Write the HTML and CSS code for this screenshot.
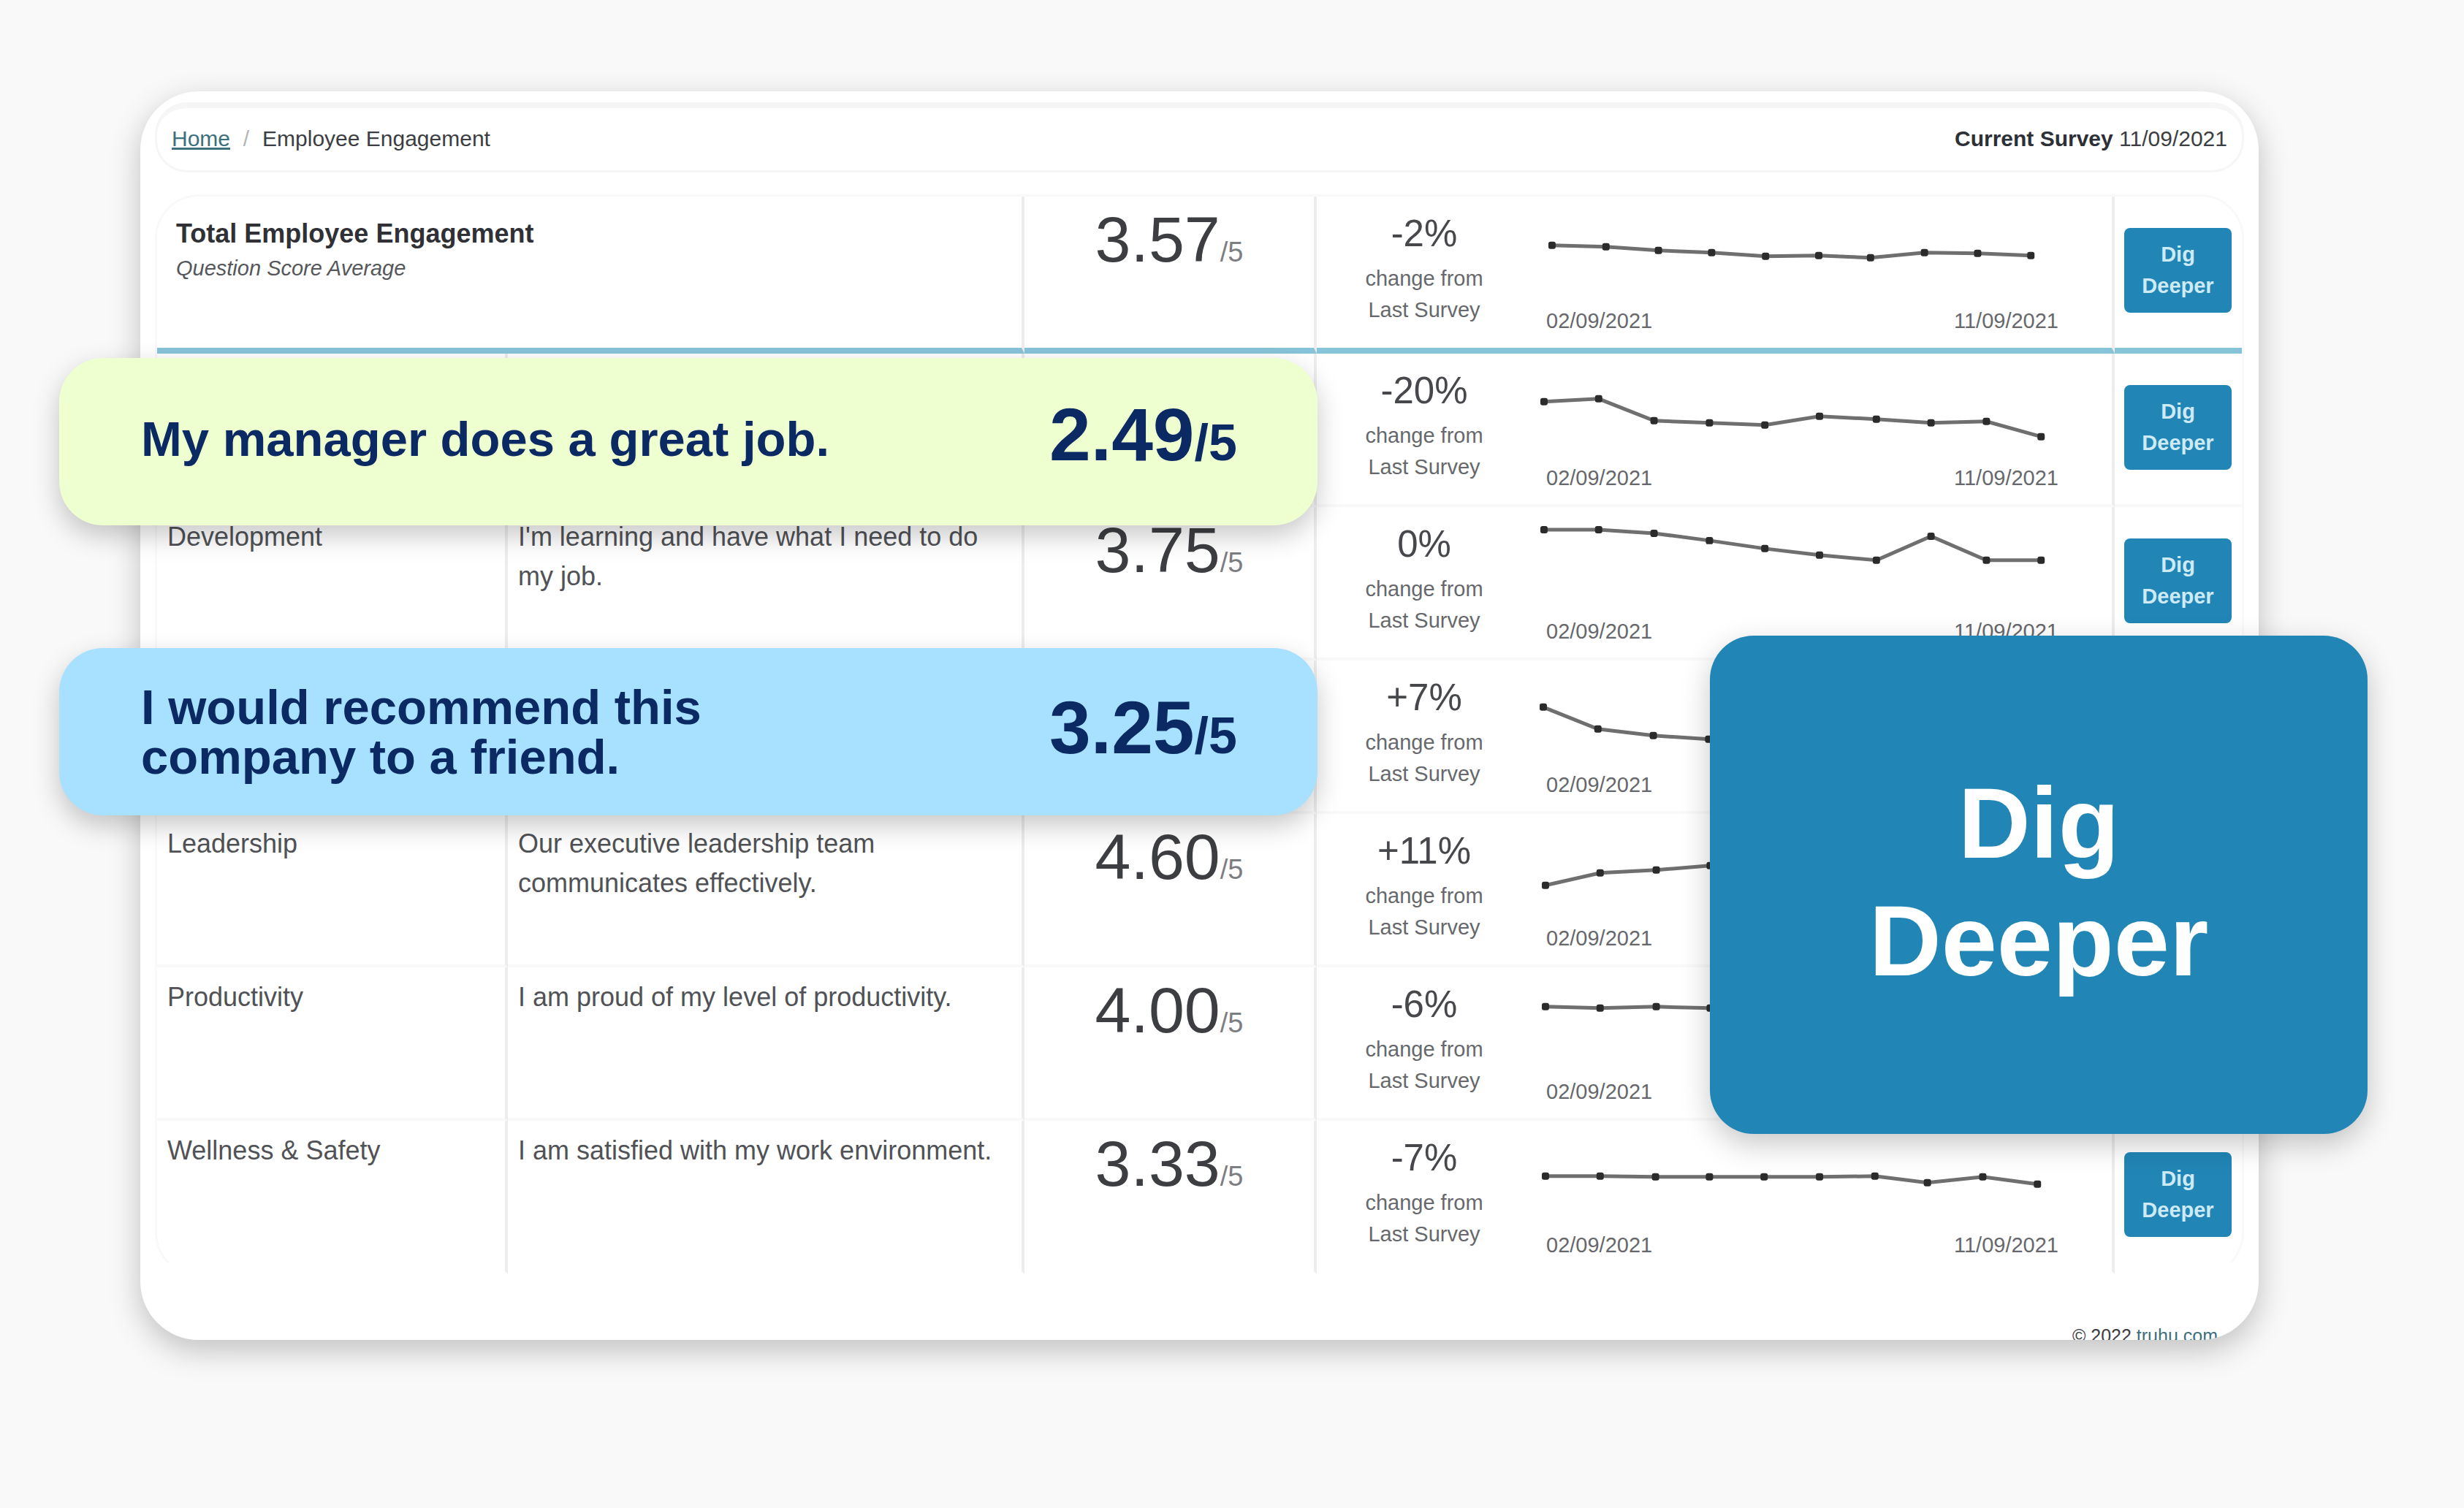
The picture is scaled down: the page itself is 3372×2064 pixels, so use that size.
FILE: index.html
```html
<!DOCTYPE html>
<html lang="en">
<head>
<meta charset="utf-8">
<title>Employee Engagement</title>
<link rel="stylesheet" href="styles.css">
</head>
<body>
<main class="stage">
  <section class="panel">
    <header class="topbar">
      <nav class="crumbs"><a href="#">Home</a><span class="sep">/</span><span>Employee Engagement</span></nav>
      <p class="current"><strong>Current Survey</strong> 11/09/2021</p>
    </header>
    <table class="scores">
      <colgroup><col class="c-name"><col class="c-text"><col class="c-score"><col class="c-change"><col class="c-trend"><col class="c-action"></colgroup>
      <tbody>
        <tr class="total">
          <th colspan="2" scope="row">Total Employee Engagement<em>Question Score Average</em></th>
          <td class="score">3.57<small>/5</small></td>
          <td class="change"><b>-2%</b>change from<br>Last Survey</td>
          <td class="trend">
            <svg viewBox="0 0 796 146"><polyline points="28,67 102,69 174,74 247,77 321,82 394,81 465,84 539,77 612,78 685,81"/></svg>
            <div class="dates"><span>02/09/2021</span><span>11/09/2021</span></div>
          </td>
          <td class="action"><button type="button">Dig Deeper</button></td>
        </tr>
        <tr>
          <td class="name"></td><td class="text"></td><td class="score"></td>
          <td class="change"><b>-20%</b>change from<br>Last Survey</td>
          <td class="trend">
            <svg viewBox="0 0 796 146"><polyline points="17,66 92,62 168,92 244,95 320,98 395,86 473,90 548,95 624,93 699,114"/></svg>
            <div class="dates"><span>02/09/2021</span><span>11/09/2021</span></div>
          </td>
          <td class="action"><button type="button">Dig Deeper</button></td>
        </tr>
        <tr>
          <td class="name">Development</td><td class="text">I'm learning and have what I need to do my job.</td><td class="score">3.75<small>/5</small></td>
          <td class="change"><b>0%</b>change from<br>Last Survey</td>
          <td class="trend">
            <svg viewBox="0 0 796 146"><polyline points="17,31 92,31 168,36 244,46 320,57 395,66 473,73 548,40 624,73 699,73"/></svg>
            <div class="dates"><span>02/09/2021</span><span>11/09/2021</span></div>
          </td>
          <td class="action"><button type="button">Dig Deeper</button></td>
        </tr>
        <tr>
          <td class="name"></td><td class="text"></td><td class="score"></td>
          <td class="change"><b>+7%</b>change from<br>Last Survey</td>
          <td class="trend">
            <svg viewBox="0 0 796 146"><polyline points="16,64 91,94 167,103 243,108"/></svg>
            <div class="dates"><span>02/09/2021</span></div>
          </td>
          <td class="action"></td>
        </tr>
        <tr>
          <td class="name">Leadership</td><td class="text">Our executive leadership team communicates effectively.</td><td class="score">4.60<small>/5</small></td>
          <td class="change"><b>+11%</b>change from<br>Last Survey</td>
          <td class="trend">
            <svg viewBox="0 0 796 146"><polyline points="19,98 94,81 171,77 245,71"/></svg>
            <div class="dates"><span>02/09/2021</span></div>
          </td>
          <td class="action"></td>
        </tr>
        <tr>
          <td class="name">Productivity</td><td class="text">I am proud of my level of productivity.</td><td class="score">4.00<small>/5</small></td>
          <td class="change"><b>-6%</b>change from<br>Last Survey</td>
          <td class="trend">
            <svg viewBox="0 0 796 146"><polyline points="19,54 94,56 171,54 245,56"/></svg>
            <div class="dates"><span>02/09/2021</span></div>
          </td>
          <td class="action"></td>
        </tr>
        <tr>
          <td class="name">Wellness &amp; Safety</td><td class="text">I am satisfied with my work environment.</td><td class="score">3.33<small>/5</small></td>
          <td class="change"><b>-7%</b>change from<br>Last Survey</td>
          <td class="trend">
            <svg viewBox="0 0 796 146"><polyline points="19,76 94,76 170,77 244,77 319,77 395,77 471,76 543,85 619,77 694,87"/></svg>
            <div class="dates"><span>02/09/2021</span><span>11/09/2021</span></div>
          </td>
          <td class="action"><button type="button">Dig Deeper</button></td>
        </tr>
      </tbody>
    </table>
    <footer class="legal">© 2022 <a href="#">truhu.com</a></footer>
  </section>

  <aside class="callout green"><p>My manager does a great job.</p><p class="mark">2.49<small>/5</small></p></aside>
  <aside class="callout blue"><p>I would recommend this<br>company to a friend.</p><p class="mark">3.25<small>/5</small></p></aside>
  <button class="dig" type="button">Dig<br>Deeper</button>
</main>

<svg class="defs" width="0" height="0" aria-hidden="true">
  <defs><marker id="dot" viewBox="0 0 12 12" refX="6" refY="6" markerWidth="12" markerHeight="12" markerUnits="userSpaceOnUse"><rect x="1" y="1" width="10" height="10" rx="3" fill="#2b2b2b"/></marker></defs>
</svg>
</body>
</html>
```

FILE: styles.css
```css
* { box-sizing: border-box; }

body {
  margin: 0;
  background: #f9f9f9;
  color: #3c3e42;
  font-family: "Liberation Sans", Arial, Helvetica, sans-serif;
}

p { margin: 0; }
.defs { position: absolute; }

.stage {
  position: relative;
  margin: 125px 281px 230px 192px;
}

.panel {
  overflow: hidden;
  padding: 15px 20px 0 20px;
  background: #fff;
  border-radius: 80px;
  box-shadow: 0 14px 44px rgba(0, 0, 0, .23);
}

/* breadcrumb bar */
.topbar {
  display: flex;
  justify-content: space-between;
  align-items: center;
  height: 96px;
  margin-bottom: 30px;
  padding: 0 20px 2px;
  border: 3px solid #f6f6f6;
  border-top-width: 8px;
  border-radius: 44px;
  font-size: 30px;
}
.crumbs { display: flex; }
.crumbs a { color: #3d6f7c; }
.sep { width: 44px; text-align: center; color: #b5b5b5; }
.current strong { color: #2d3036; }

/* score table */
.scores {
  width: 100%;
  table-layout: fixed;
  border-collapse: separate;
  border-spacing: 0;
  border: 3px solid #f9f9f9;
  border-bottom-color: transparent;
  border-radius: 60px;
}
.c-name { width: 480px; }
.c-score { width: 400px; }
.c-change { width: 294px; }
.c-trend { width: 798px; }
.c-action { width: 174px; }
.c-text { width: auto; }

.scores tr { height: 210px; }
.scores .total { height: 215px; }
.scores td, .scores th {
  padding: 0;
  vertical-align: top;
  border-bottom: 4px solid #f9f9f9;
  border-right: 4px solid #ededed;
}
.scores .total > * { border-bottom: 8px solid #87c3d9; }
.scores tr:last-child > * { border-bottom-color: transparent; }
.scores .change, .scores .action { border-right: 0; }

.scores th {
  padding: 24px 26px 0;
  text-align: left;
  color: #2f3136;
  font-size: 36px;
  line-height: 54px;
}
.scores em {
  display: block;
  font-size: 29px;
  line-height: 40px;
  font-weight: 400;
  color: #55575b;
}
.scores .name, .scores .text {
  padding: 14px 12px 0 14px;
  color: #505256;
  font-size: 36px;
  line-height: 54px;
}
.score {
  text-align: center;
  font-size: 88px;
  line-height: 118px;
}
.score small { font-size: 38px; color: #7c7e82; }
.scores .change {
  padding-top: 19px;
  text-align: center;
  font-size: 29px;
  line-height: 43px;
  color: #66686c;
}
.change b {
  display: block;
  margin-bottom: 8px;
  font-size: 51px;
  line-height: 64px;
  font-weight: 400;
  color: #46484c;
}
.trend svg { display: block; width: 100%; height: auto; }
.trend polyline {
  fill: none;
  stroke: #6f6f6f;
  stroke-width: 5;
  marker-start: url(#dot);
  marker-mid: url(#dot);
  marker-end: url(#dot);
}
.dates {
  display: flex;
  justify-content: space-between;
  padding: 4px 73px 0 20px;
  font-size: 29px;
  line-height: 40px;
  color: #66686c;
}
.scores .action { padding: 43px 14px 0 13px; }
.action button {
  display: block;
  width: 100%;
  height: 116px;
  padding: 0 20px;
  border: 0;
  border-radius: 8px;
  background: #2186b6;
  color: #cdeaf5;
  font: 700 29px/43px "Liberation Sans", Arial, sans-serif;
}

.legal {
  height: 20px;
  margin-top: 67px;
  padding-right: 36px;
  overflow: hidden;
  text-align: right;
  font-size: 25px;
  line-height: 28px;
}
.legal a { color: #3d6f7c; }

/* enlarged callouts lying over the panel */
.callout {
  position: absolute;
  left: -111px;
  display: flex;
  justify-content: space-between;
  align-items: center;
  width: 1722px;
  height: 229px;
  padding: 0 110px 0 112px;
  border-radius: 60px;
  box-shadow: 0 14px 36px rgba(0, 0, 0, .22);
  color: #0b2a64;
  font-size: 67px;
  line-height: 68px;
  font-weight: 700;
}
.green { top: 365px; padding-bottom: 8px; background: #eeffd0; }
.blue { top: 762px; background: #a8e0ff; }
.mark { font-size: 102px; line-height: 104px; }
.mark small { font-size: 70px; }

.dig {
  position: absolute;
  top: 745px;
  right: -149px;
  width: 900px;
  height: 682px;
  padding: 0 0 8px;
  border: 0;
  border-radius: 60px;
  background: #2186b6;
  box-shadow: 0 14px 40px rgba(0, 0, 0, .22);
  color: #fff;
  font: 700 137px/161px "Liberation Sans", Arial, sans-serif;
}
```
